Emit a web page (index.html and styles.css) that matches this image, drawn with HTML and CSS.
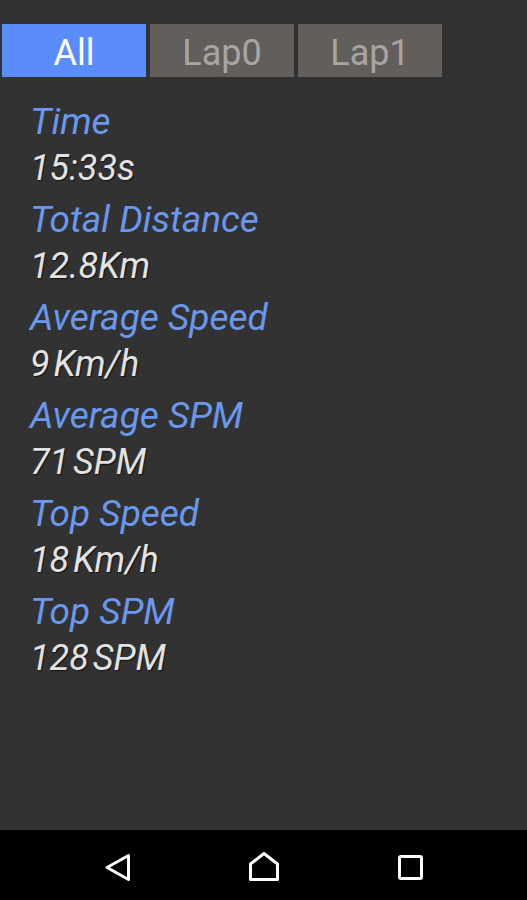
FILE: index.html
```html
<!DOCTYPE html>
<html>
<head>
<meta charset="utf-8">
<link rel="stylesheet" href="styles.css">
</head>
<body>
<div class="screen">
  <div class="tabs">
    <div class="tab active">All</div>
    <div class="tab">Lap0</div>
    <div class="tab">Lap1</div>
  </div>
  <div class="stats">
    <div class="stat"><div class="label">Time</div><div class="value">15:33s</div></div>
    <div class="stat"><div class="label">Total Distance</div><div class="value">12.8Km</div></div>
    <div class="stat"><div class="label">Average Speed</div><div class="value">9 Km/h</div></div>
    <div class="stat"><div class="label">Average SPM</div><div class="value">71 SPM</div></div>
    <div class="stat"><div class="label">Top Speed</div><div class="value">18 Km/h</div></div>
    <div class="stat"><div class="label">Top SPM</div><div class="value">128 SPM</div></div>
  </div>
</div>
<div class="navbar">
  <svg class="nav-icon" width="30" height="30" viewBox="0 0 30 30"><path d="M25.5 3.5 L25.5 27.5 L4 15.5 Z" fill="none" stroke="#fff" stroke-width="3" stroke-linejoin="round"/></svg>
  <svg class="nav-icon" width="30" height="30" viewBox="0 0 30 30"><path d="M1.5 12 L15 1.5 L28.5 12 L28.5 27.5 L1.5 27.5 Z" fill="none" stroke="#fff" stroke-width="3" stroke-linejoin="round"/></svg>
  <svg class="nav-icon" width="30" height="30" viewBox="0 0 30 30"><rect x="4.5" y="4.5" width="22" height="22" rx="1.5" fill="none" stroke="#fff" stroke-width="3"/></svg>
</div>
</body>
</html>
```
FILE: styles.css
```css
html, body {
  margin: 0;
  padding: 0;
  background: #323232;
  font-family: Roboto, "Liberation Sans", sans-serif;
}
.screen {
  height: 830px;
  background: #323232;
  overflow: hidden;
}
.tabs {
  display: flex;
  gap: 4px;
  padding: 24px 0 0 2px;
}
.tab {
  width: 144px;
  height: 53px;
  box-sizing: border-box;
  padding-top: 4px;
  background: #625e5c;
  color: #a9a5a3;
  font-size: 36px;
  display: flex;
  align-items: center;
  justify-content: center;
}
.tab.active {
  background: #5b8cfb;
  color: #ffffff;
}
.stats {
  padding: 22px 0 0 30px;
  display: flex;
  flex-direction: column;
}
.stat {
  height: 98px;
}
.label {
  color: #6a98ee;
  font-style: italic;
  font-size: 37px;
  line-height: 46px;
}
.value {
  color: #e2e2e2;
  font-style: italic;
  font-size: 36px;
  line-height: 46px;
  word-spacing: -5px;
  text-shadow: 1px 1px 1px #111;
}
.navbar {
  height: 70px;
  box-sizing: border-box;
  padding-top: 4px;
  background: #000;
  display: flex;
  justify-content: center;
  align-items: center;
  gap: 116px;
}
.nav-icon {
  display: block;
}
```
